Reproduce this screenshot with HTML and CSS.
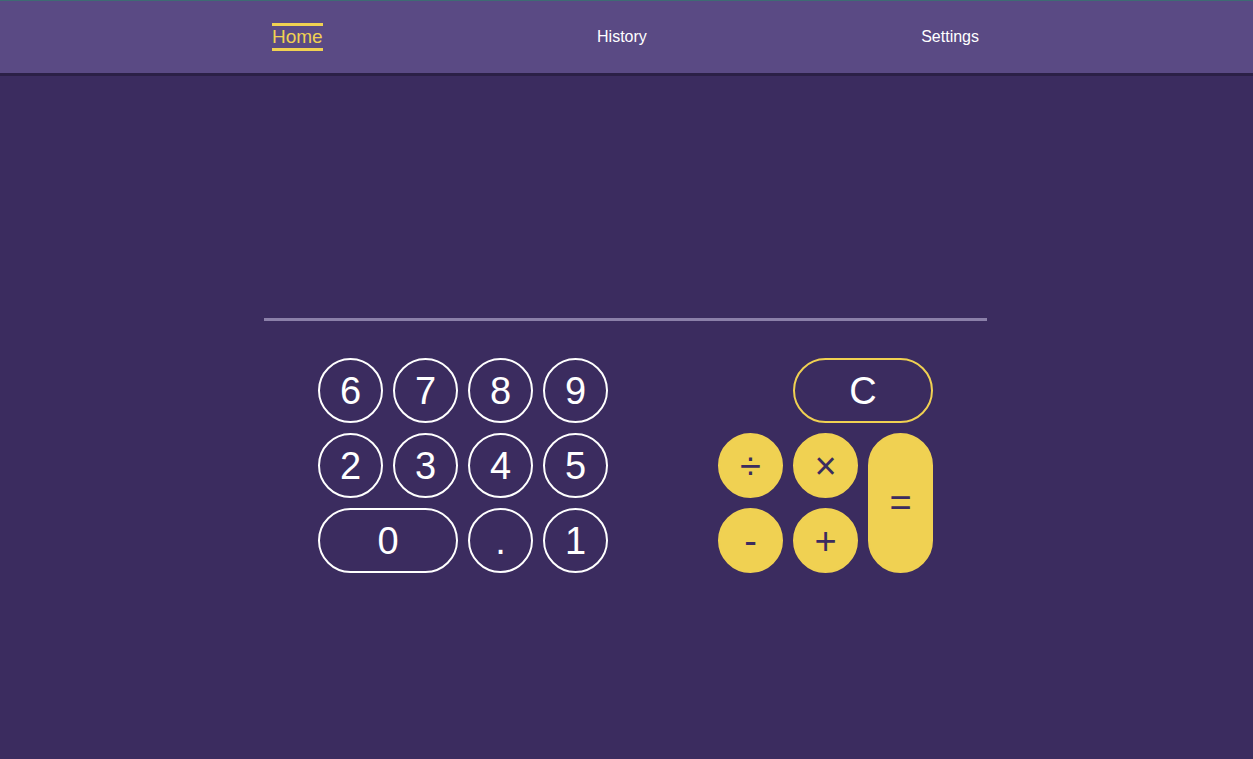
FILE: index.html
```html
<!DOCTYPE html>
<html lang="en">
<head>
<meta charset="utf-8">
<title>Calculator</title>
<link rel="stylesheet" href="styles.css">
</head>
<body>
<header class="topbar">
  <nav class="nav">
    <a class="nav-link active" href="#">Home</a>
    <a class="nav-link" href="#">History</a>
    <a class="nav-link" href="#">Settings</a>
  </nav>
</header>
<main class="calc">
  <div class="display"></div>
  <div class="divider"></div>
  <div class="keypad">
    <div class="digits">
      <button class="key">6</button>
      <button class="key">7</button>
      <button class="key">8</button>
      <button class="key">9</button>
      <button class="key">2</button>
      <button class="key">3</button>
      <button class="key">4</button>
      <button class="key">5</button>
      <button class="key wide">0</button>
      <button class="key">.</button>
      <button class="key">1</button>
    </div>
    <div class="ops">
      <button class="key clear">C</button>
      <button class="key op">÷</button>
      <button class="key op">×</button>
      <button class="key op equals">=</button>
      <button class="key op">-</button>
      <button class="key op">+</button>
    </div>
  </div>
</main>
</body>
</html>
```

FILE: styles.css
```css
* { box-sizing: border-box; }

html, body {
  margin: 0;
  height: 100%;
}

body {
  background: #3b2c5f;
  font-family: "Liberation Sans", Arial, Helvetica, sans-serif;
  color: #fff;
}

.topbar {
  border-top: 1px solid #3e6b73;
  background: #5a4a84;
  height: 73px;
  box-shadow: 0 3px 0 #2b2046;
  position: relative;
}

.nav {
  width: 709px;
  height: 72px;
  margin: 0 auto;
  padding-right: 2px;
  display: flex;
  justify-content: space-between;
  align-items: center;
}

.nav-link {
  color: #fff;
  text-decoration: none;
  font-size: 16px;
}

.nav-link.active {
  color: #f0d152;
  font-size: 19px;
  line-height: 22px;
  border-top: 3px solid #f0d152;
  border-bottom: 3px solid #f0d152;
}

.calc {
  display: flex;
  flex-direction: column;
  align-items: center;
  padding-right: 2px;
}

.display {
  height: 245px;
  width: 723px;
}

.divider {
  width: 723px;
  height: 3px;
  background: #8b80a9;
}

.keypad {
  margin-top: 37px;
  display: flex;
  gap: 110px;
}

.digits {
  display: grid;
  grid-template-columns: repeat(4, 65px);
  grid-auto-rows: 65px;
  gap: 10px;
}

.ops {
  display: grid;
  grid-template-columns: repeat(3, 65px);
  grid-auto-rows: 65px;
  gap: 10px;
}

.key {
  margin: 0;
  padding: 0;
  border: 2px solid #fff;
  border-radius: 999px;
  background: transparent;
  color: #fff;
  font-family: "Liberation Sans", Arial, Helvetica, sans-serif;
  font-size: 38px;
  line-height: 1;
  display: flex;
  align-items: center;
  justify-content: center;
}

.key.wide {
  grid-column: span 2;
}

.key.clear {
  grid-column: 2 / 4;
  border-color: #f0d152;
}

.key.op {
  background: #f0d152;
  border-color: #f0d152;
  color: #3b2c5f;
}

.key.equals {
  grid-column: 3;
  grid-row: 2 / 4;
}
```
